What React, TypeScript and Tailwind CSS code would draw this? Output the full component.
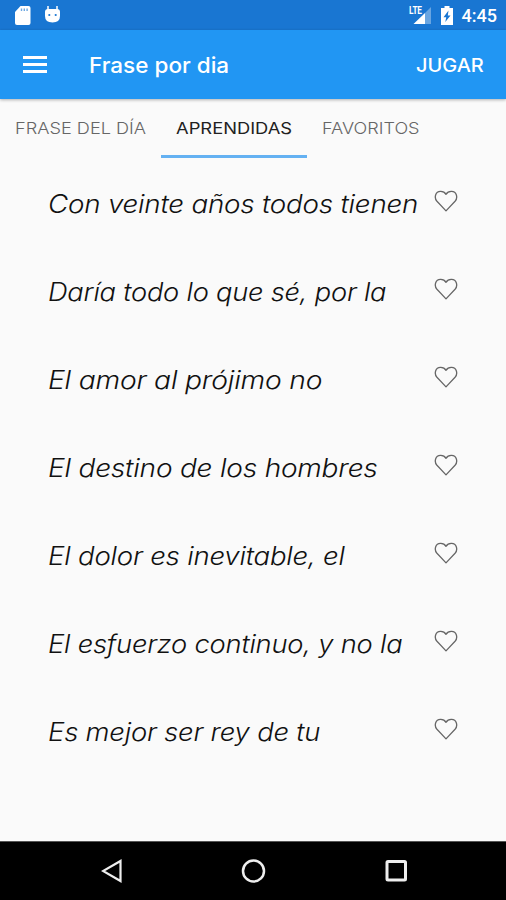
import React from "react";

const phrases = [
  { text: "Con veinte años todos tienen", stretch: "scale-x-[1.110]" },
  { text: "Daría todo lo que sé, por la", stretch: "scale-x-[1.090]" },
  { text: "El amor al prójimo no", stretch: "scale-x-[1.130]" },
  { text: "El destino de los hombres", stretch: "scale-x-[1.122]" },
  { text: "El dolor es inevitable, el", stretch: "scale-x-[1.104]" },
  { text: "El esfuerzo continuo, y no la", stretch: "scale-x-[1.093]" },
  { text: "Es mejor ser rey de tu", stretch: "scale-x-[1.098]" },
];

function Heart() {
  return (
    <svg className="ml-px mt-[12px] h-[22px] w-[24px] shrink-0" viewBox="0 0 26 23" preserveAspectRatio="none" fill="none" stroke="#666" strokeWidth="1.400" strokeLinejoin="round">
      <path d="M13 21.800 3.200 11.800C-.2 8 1.500 1.700 7 1.500c2.500-.1 4.500.6 6 3 1.500-2.400 3.500-3.100 6-3 5.500.2 7.200 6.500 3.800 10.300Z" />
    </svg>
  );
}

function StatusBar() {
  return (
    <div className="flex h-[30px] shrink-0 items-start bg-[#1976d2] pl-[15px] pr-[9px] text-white">
      <svg className="mt-[6px] h-[19px] w-[16px]" viewBox="0 0 16 19" fill="none">
        <path d="M5.500 0H13.500Q15.500 0 15.500 2V17Q15.500 19 13.500 19H2Q0 19 0 17V6Z" fill="white" />
        <path d="M6.500 2.500v2.500M9.300 2.500v2.500M12.100 2.500v2.500" stroke="#6da8e2" strokeWidth="1.400" />
      </svg>
      <svg className="ml-[13px] mt-[5px] h-[18px] w-[17px]" viewBox="0 0 17 18" fill="none">
        <path d="M4 1v4M13 1v4" stroke="white" strokeWidth="1.500" />
        <path d="M1 7Q1 4 4 4H13Q16 4 16 7V11Q16 17.500 8.500 17.500Q1 17.500 1 11Z" fill="white" />
        <circle cx="5.300" cy="10" r="1.100" fill="#1976d2" />
        <circle cx="11.700" cy="10" r="1.100" fill="#1976d2" />
      </svg>
      <div className="relative ml-auto mr-[9px] mt-[6px] h-[19px] w-[23px]">
        <svg className="h-[19px] w-[23px]" viewBox="0 0 23 19">
          <path d="M22 1V18H16V7Z" fill="white" fillOpacity=".35" />
          <path d="M16 7V18H4.500Z" fill="white" />
        </svg>
        <span className="absolute -top-px left-0 origin-left scale-x-[0.750] font-[Roboto,sans-serif] text-[11px] font-bold leading-[11px] tracking-[-0.200px]">LTE</span>
      </div>
      <svg className="mr-[9px] mt-[6px] h-[19px] w-[12px]" viewBox="0 0 12 19">
        <path d="M3.500 0H8.500V2H12V19H0V2H3.500Z" fill="white" />
        <path d="M7.500 4.500 2.500 11.200H5.200L4.300 16 9.500 9.500H6.800Z" fill="#1976d2" />
      </svg>
      <span className="mt-[6px] font-[Roboto,sans-serif] text-[18px] font-medium leading-[20px]">4:45</span>
    </div>
  );
}

export default function App() {
  return (
    <div className="flex h-[900px] w-[506px] flex-col overflow-hidden bg-[#fafafa] font-[Inter,sans-serif]">
      <StatusBar />
      <header className="flex h-[69px] shrink-0 items-center bg-[#2196f3] pl-[23px] pr-[22px] text-white shadow-[0_1px_3px_rgba(0,0,0,0.3)]">
        <div className="flex w-[24px] flex-col gap-[4px]">
          <div className="h-[3px] bg-white" />
          <div className="h-[3px] bg-white" />
          <div className="h-[3px] bg-white" />
        </div>
        <h1 className="ml-[42px] origin-left scale-x-[1.048] whitespace-nowrap text-[21.500px] font-medium leading-[28px]">Frase por dia</h1>
        <span className="ml-auto origin-right scale-x-[1.080] text-[18.500px] font-medium leading-[28px]">JUGAR</span>
      </header>
      <nav className="flex h-[59px] shrink-0 text-[16px] leading-[58px] text-[#666]">
        <div className="w-[161px] pl-[15px]">
          <span className="inline-block origin-left scale-x-[1.135] whitespace-nowrap font-light">FRASE DEL DÍA</span>
        </div>
        <div className="w-[146px] border-b-[3px] border-[#64b1f2] pl-[15px]">
          <span className="inline-block origin-left scale-x-[1.145] whitespace-nowrap text-[#212121]">APRENDIDAS</span>
        </div>
        <div className="pl-[15px]">
          <span className="inline-block origin-left scale-x-[1.130] whitespace-nowrap font-light">FAVORITOS</span>
        </div>
      </nav>
      <main className="flex flex-1 flex-col pt-[20px]">
        {phrases.map((p) => (
          <div key={p.text} className="flex h-[88px] shrink-0 pl-[48px]">
            <div className="w-[385px] shrink-0">
              <p className={`w-fit origin-left whitespace-nowrap text-[25px] font-[350] italic leading-[52px] tracking-[-0.200px] text-[#111] ${p.stretch}`}>{p.text}</p>
            </div>
            <Heart />
          </div>
        ))}
      </main>
      <footer className="flex h-[59px] shrink-0 border-t border-[#555] bg-black pl-[101px] pt-[17px]">
        <svg className="h-[24px] w-[22px]" viewBox="0 0 22 24" fill="none" stroke="#eee" strokeWidth="2.200">
          <path d="M19.500 2V22L2 12Z" />
        </svg>
        <svg className="ml-[118px] h-[24px] w-[25px]" viewBox="0 0 25 24" fill="none" stroke="#eee" strokeWidth="2.500">
          <circle cx="12.500" cy="12" r="10.500" />
        </svg>
        <svg className="ml-[119px] h-[24px] w-[22px]" viewBox="0 0 22 24" fill="none" stroke="#eee" strokeWidth="3">
          <rect x="2" y="2.500" width="18.500" height="18.500" rx="1" />
        </svg>
      </footer>
    </div>
  );
}
